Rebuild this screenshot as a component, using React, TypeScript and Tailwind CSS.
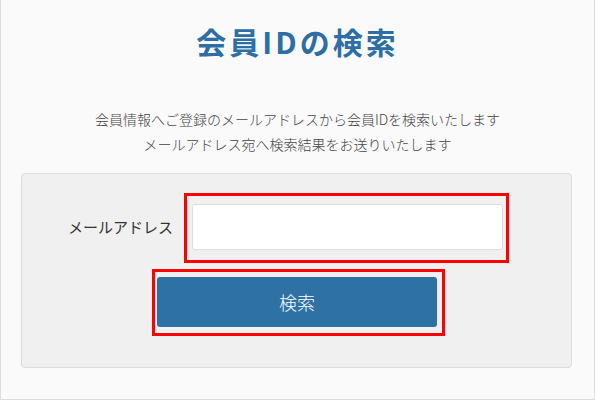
import React from "react";

export default function App() {
  return (
    <div
      className="w-[595px] h-[400px] bg-[#fafafa] border-x border-b border-[#dddddd] flex flex-col"
      style={{ fontFamily: '"Noto Sans CJK JP", "Noto Sans", sans-serif' }}
    >
      <h1 className="mt-[26px] text-center text-[30px] leading-[30px] font-bold text-[#2d6ea4] tracking-[3px]">
        会員IDの検索
      </h1>
      <div className="mt-[51px] text-center text-[14px] leading-[25px] font-light text-[#444444]">
        <p>会員情報へご登録のメールアドレスから会員IDを検索いたします</p>
        <p>メールアドレス宛へ検索結果をお送りいたします</p>
      </div>
      <div className="mt-[16px] ml-[20px] w-[551px] h-[195px] bg-[#f0f0f0] border border-[#dcdcdc] rounded-[4px] flex flex-col">
        <div className="mt-[30px] flex items-center">
          <div className="w-[151px] text-right text-[15px] text-[#333333]">メールアドレス</div>
          <div className="relative ml-[19px]">
            <div className="w-[311px] h-[46px] bg-white border border-[#dddddd] rounded-[3px]" />
            <div className="absolute -top-[11px] -left-[8px] -right-[6px] -bottom-[13px] border-[3px] border-[#ff0000]" />
          </div>
        </div>
        <div className="mt-[27px] ml-[135px] relative w-[280px]">
          <div className="w-[280px] h-[50px] bg-[#2d71a5] rounded-[3px] flex items-center justify-center text-white text-[18px] font-light">
            検索
          </div>
          <div className="absolute -top-[8px] -left-[5px] -right-[8px] -bottom-[9px] border-[3px] border-[#ff0000]" />
        </div>
      </div>
    </div>
  );
}
